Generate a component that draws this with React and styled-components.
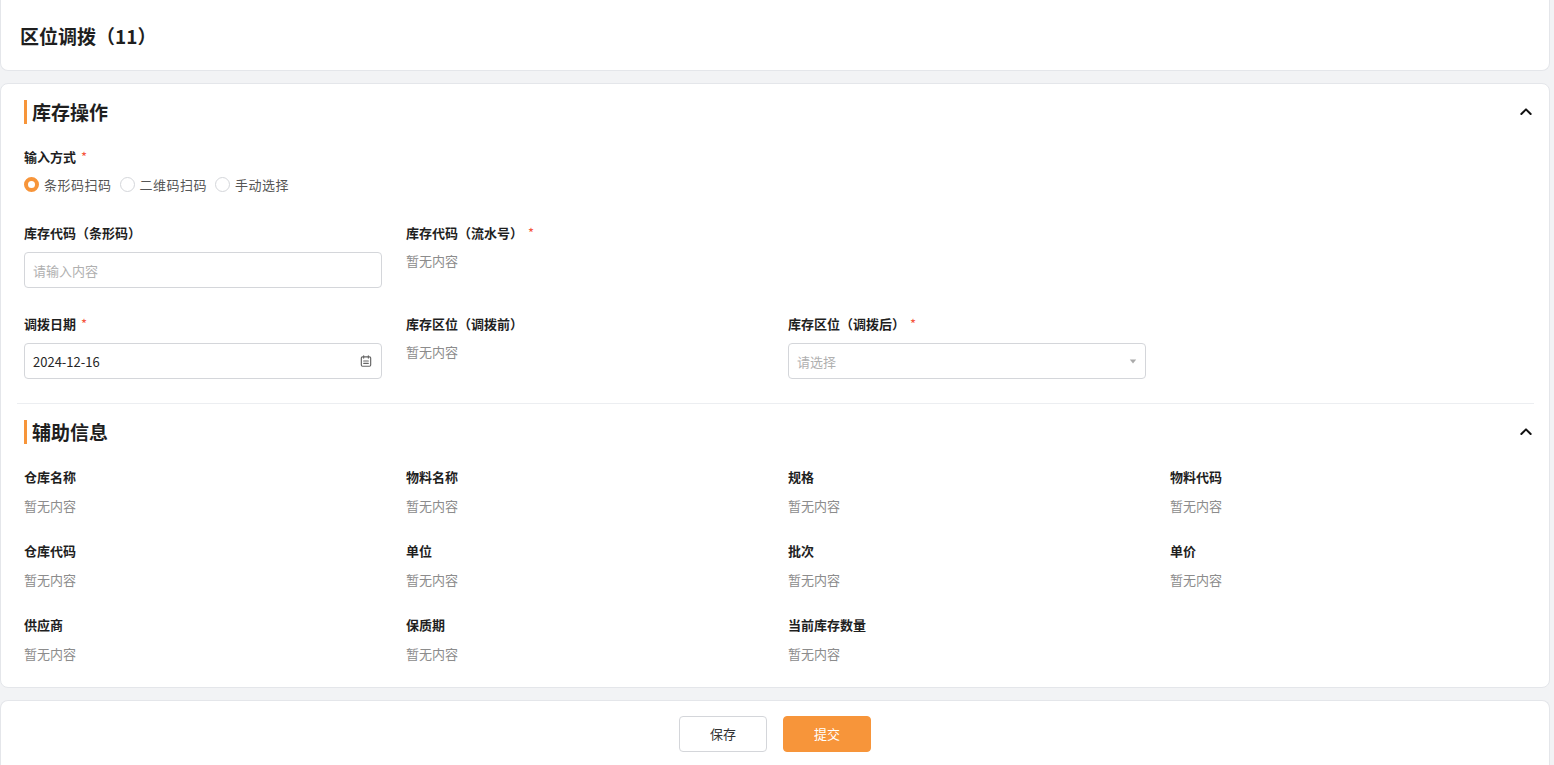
import React from "react";
import styled, { createGlobalStyle } from "styled-components";

const Global = createGlobalStyle`
  html, body { margin: 0; background: #f2f3f5; }
  body { font-family: "Noto Sans CJK SC", "Noto Sans", sans-serif; color: #1f1f1f; }
`;

const Page = styled.div`
  width: 1550px;
  display: flex;
  flex-direction: column;
  gap: 12px;
`;

const Card = styled.div`
  background: #fff;
  border: 1px solid #e4e6ea;
  border-radius: 8px;
  box-sizing: border-box;
`;

const Header = styled(Card)`
  height: 71px;
  border-top: none;
  border-radius: 0 0 8px 8px;
  display: flex;
  align-items: center;
  padding-left: 19px;
  font-size: 19px;
  font-weight: 700;
`;

const Main = styled(Card)`
  padding: 10px 15px 24px 23px;
`;

const SectionHead = styled.div`
  height: 36px;
  display: flex;
  align-items: center;
  justify-content: space-between;
  margin: 0 0 18px;
`;

const SectionTitle = styled.div`
  border-left: 3px solid #f7953a;
  padding-left: 5px;
  font-size: 19px;
  font-weight: 700;
  line-height: 24px;
`;

const Divider = styled.div`
  height: 1px;
  background: #eceef1;
  margin: 24px 0 10px -7px;
`;

const Grid = styled.div`
  display: grid;
  grid-template-columns: repeat(4, 358px);
  column-gap: 24px;
  row-gap: ${p => p.$rowGap || 27}px;
`;

const Field = styled.div`
  display: flex;
  flex-direction: column;
`;

const Label = styled.div`
  font-size: 13px;
  font-weight: 700;
  line-height: 18px;
  margin-bottom: ${p => p.$mb || 10}px;
`;

const Star = styled.span`
  color: #f5543d;
  margin-left: 5px;
  font-weight: 400;
`;

const Empty = styled.div`
  font-size: 13px;
  color: #8c8c8c;
  line-height: 18px;
`;

const Input = styled.div`
  height: 36px;
  border: 1px solid #d4d6da;
  border-radius: 4px;
  box-sizing: border-box;
  display: flex;
  align-items: center;
  justify-content: space-between;
  padding: 0 8px;
  font-size: 13px;
  color: ${p => (p.$ph ? "#b0b0b0" : "#262626")};
`;

const Radios = styled.div`
  display: flex;
  gap: 8px;
  font-size: 13px;
  letter-spacing: 0.5px;
  color: #555;
  margin-bottom: 30px;
`;

const Radio = styled.label`
  display: flex;
  align-items: center;
  gap: 5px;
`;

const Dot = styled.span`
  width: 15px;
  height: 15px;
  border-radius: 50%;
  box-sizing: border-box;
  border: ${p => (p.$on ? "4px solid #f7953a" : "1px solid #d4d6da")};
  background: #fff;
`;

const Footer = styled(Card)`
  height: 66px;
  border-bottom: none;
  border-radius: 8px 8px 0 0;
  display: flex;
  justify-content: center;
  align-items: center;
  gap: 16px;
`;

const Btn = styled.button`
  width: 88px;
  height: 36px;
  border-radius: 4px;
  font-family: inherit;
  font-size: 13px;
  border: 1px solid ${p => (p.$primary ? "#f7953a" : "#d4d6da")};
  background: ${p => (p.$primary ? "#f7953a" : "#fff")};
  color: ${p => (p.$primary ? "#fff" : "#333")};
`;

const Chevron = () => (
  <svg width="16" height="16" viewBox="0 0 24 24" fill="none" stroke="#111" strokeWidth="3" strokeLinecap="round" strokeLinejoin="round">
    <path d="M5 15l7-7 7 7" />
  </svg>
);

const CalIcon = () => (
  <svg width="14" height="14" viewBox="0 0 24 24" fill="none" stroke="#666" strokeWidth="2" strokeLinecap="round">
    <rect x="4" y="5" width="16" height="16" rx="2" />
    <path d="M8 3v4M16 3v4M8 12h8M8 16h8" />
  </svg>
);

const Caret = () => (
  <svg width="8" height="8" viewBox="0 0 10 10"><path d="M1 3h8L5 8z" fill="#aaa" /></svg>
);

const aux = ["仓库名称", "物料名称", "规格", "物料代码", "仓库代码", "单位", "批次", "单价", "供应商", "保质期", "当前库存数量"];

export default function App() {
  return (
    <>
      <Global />
      <Page>
        <Header>区位调拨（11）</Header>
        <Main>
          <SectionHead>
            <SectionTitle>库存操作</SectionTitle>
            <Chevron />
          </SectionHead>
          <Label $mb={9}>输入方式<Star>*</Star></Label>
          <Radios>
            <Radio><Dot $on />条形码扫码</Radio>
            <Radio><Dot />二维码扫码</Radio>
            <Radio><Dot />手动选择</Radio>
          </Radios>
          <Grid $rowGap={27}>
            <Field>
              <Label>库存代码（条形码）</Label>
              <Input $ph>请输入内容</Input>
            </Field>
            <Field>
              <Label>库存代码（流水号）<Star>*</Star></Label>
              <Empty>暂无内容</Empty>
            </Field>
            <div />
            <div />
            <Field>
              <Label>调拨日期<Star>*</Star></Label>
              <Input>2024-12-16<CalIcon /></Input>
            </Field>
            <Field>
              <Label>库存区位（调拨前）</Label>
              <Empty>暂无内容</Empty>
            </Field>
            <Field>
              <Label>库存区位（调拨后）<Star>*</Star></Label>
              <Input $ph>请选择<Caret /></Input>
            </Field>
          </Grid>
          <Divider />
          <SectionHead>
            <SectionTitle>辅助信息</SectionTitle>
            <Chevron />
          </SectionHead>
          <Grid $rowGap={27}>
            {aux.map(t => (
              <Field key={t}>
                <Label $mb={11}>{t}</Label>
                <Empty>暂无内容</Empty>
              </Field>
            ))}
          </Grid>
        </Main>
        <Footer>
          <Btn>保存</Btn>
          <Btn $primary>提交</Btn>
        </Footer>
      </Page>
    </>
  );
}
